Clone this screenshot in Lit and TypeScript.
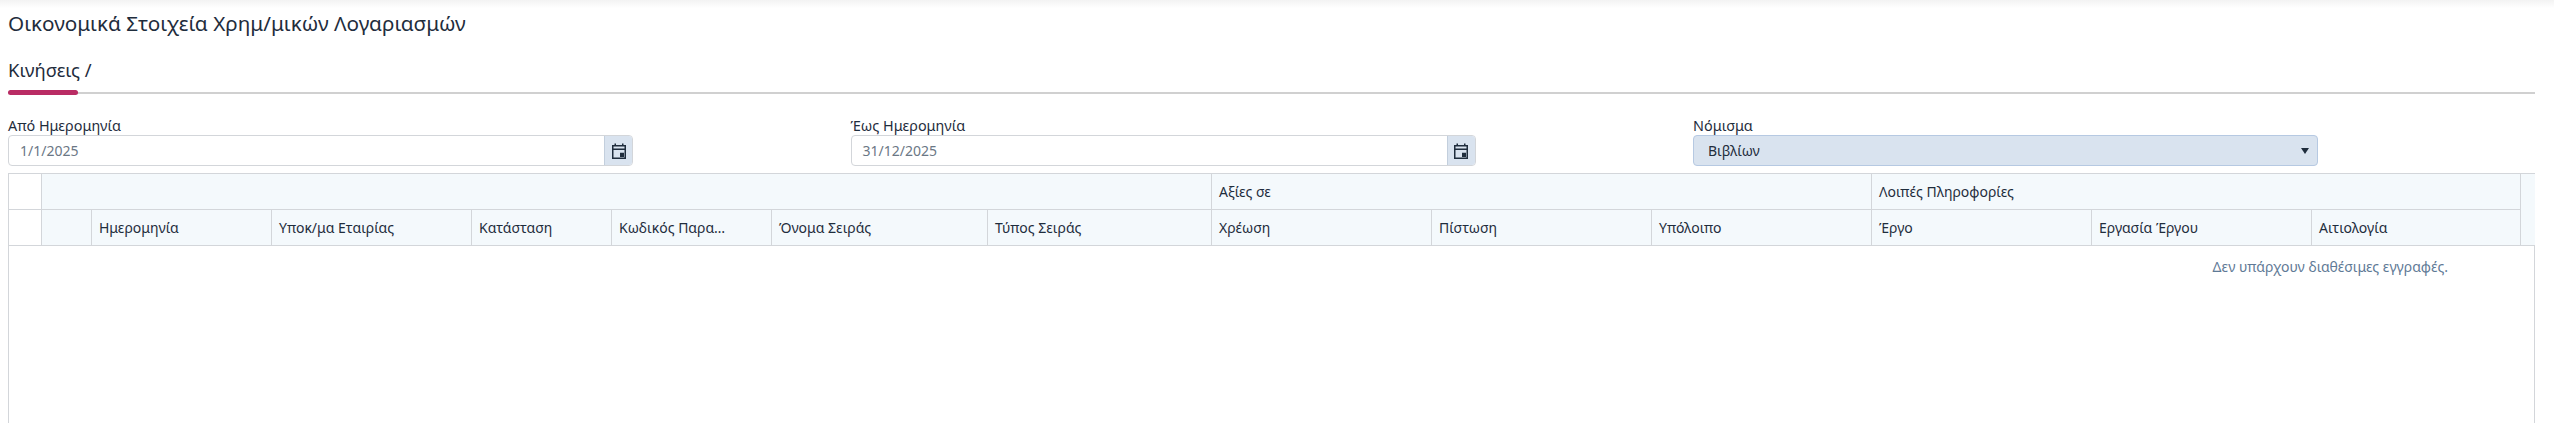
import { LitElement, html, css } from "lit";
import { customElement } from "lit/decorators.js";

const COLS = [
  "Ημερομηνία",
  "Υποκ/μα Εταιρίας",
  "Κατάσταση",
  "Κωδικός Παρα…",
  "Όνομα Σειράς",
  "Τύπος Σειράς",
  "Χρέωση",
  "Πίστωση",
  "Υπόλοιπο",
  "Έργο",
  "Εργασία Έργου",
  "Αιτιολογία",
];

const calendar = html`<svg class="cal" viewBox="0 0 14 16" width="14" height="16" aria-hidden="true">
  <path d="M0.75 2.75H13.25V15.25H0.75ZM0.75 6.25H13.25" fill="none" stroke="currentColor" stroke-width="1.5"/>
  <path d="M2.5 0.5H4V3H2.5ZM10 0.5H11.5V3H10ZM8 9.75H12V14H8Z" fill="currentColor"/>
</svg>`;

@customElement("app-root")
export class AppRoot extends LitElement {
  static styles = css`
    :host {
      display: block;
      height: 423px;
      overflow: hidden;
      background: #fff;
      color: #1f2d3d;
      font-family: "Noto Sans", "Open Sans", sans-serif;
      font-size: 14px;
    }
    .page {
      height: 423px;
      box-sizing: border-box;
      padding: 0 19px 0 8px;
      display: flex;
      flex-direction: column;
      background: linear-gradient(#f3f3f3, #fff 8px);
    }
    .title {
      margin: 0;
      padding-top: 10px;
      font-size: 20.7px;
      line-height: 27px;
      font-weight: 400;
    }
    .tabs {
      margin-top: 21px;
      height: 24px;
      font-size: 18.4px;
      line-height: 24px;
    }
    .rule {
      margin-top: 10px;
      height: 2px;
      background: #d0d0d0;
      position: relative;
    }
    .ink {
      position: absolute;
      left: 0;
      top: -2px;
      width: 70px;
      height: 5px;
      border-radius: 3px;
      background: #b92c64;
    }
    .filters {
      margin-top: 22px;
      display: grid;
      grid-template-columns: repeat(3, 625px);
      column-gap: 217.5px;
    }
    .label {
      font-size: 14.4px;
      line-height: 19px;
      height: 19px;
    }
    .field {
      display: flex;
      height: 31px;
      box-sizing: border-box;
      border: 1px solid #d3d6da;
      border-radius: 4px;
      overflow: hidden;
      color: #6b7785;
      font-size: 14px;
      line-height: 29px;
    }
    .value {
      flex: 1;
      padding-left: 11px;
    }
    .addon {
      box-sizing: border-box;
      width: 28px;
      background: #d9e3ef;
      border-left: 1px solid #c3cfdd;
      display: flex;
      align-items: center;
      justify-content: center;
      color: #1f2d3d;
    }
    .select {
      background: #d9e3ef;
      border-color: #b6c9e2;
      color: #1f2d3d;
      padding-left: 14px;
      padding-right: 8px;
      align-items: center;
      justify-content: space-between;
    }
    .arrow {
      width: 0;
      height: 0;
      border-left: 4px solid transparent;
      border-right: 4px solid transparent;
      border-top: 6px solid #1f2d3d;
    }
    .table {
      margin-top: 7px;
      flex: 1;
      border: 1px solid #d3d6da;
      border-bottom: 0;
      min-height: 0;
    }
    .head {
      display: grid;
      grid-template-columns: 33px 50px 180px 200px 140px 160px 216px 224px 220px 220px 220px 220px 220px 209px 13px;
      grid-template-rows: 36px 36px;
    }
    .cell {
      box-sizing: border-box;
      border-right: 1px solid #d3d6da;
      border-bottom: 1px solid #d3d6da;
      background: #f4f9fc;
      padding: 0 7px;
      line-height: 35px;
      white-space: nowrap;
      min-width: 0;
    }
    .blank { background: #fff; }
    .gutter {
      grid-row: 1 / span 2;
      grid-column: 15;
      border-right: 0;
    }
    .span-7 { grid-column: span 7; }
    .span-3 { grid-column: span 3; }
    .empty {
      padding: 11px 86px 0 0;
      text-align: right;
      color: #5f7a96;
      font-size: 14px;
      line-height: 19px;
    }
  `;

  render() {
    return html`<div class="page">
      <h1 class="title">Οικονομικά Στοιχεία Χρημ/μικών Λογαριασμών</h1>
      <div class="tabs">Κινήσεις /</div>
      <div class="rule"><div class="ink"></div></div>
      <div class="filters">
        <div>
          <div class="label">Από Ημερομηνία</div>
          <div class="field"><span class="value">1/1/2025</span><span class="addon">${calendar}</span></div>
        </div>
        <div>
          <div class="label">Έως Ημερομηνία</div>
          <div class="field"><span class="value">31/12/2025</span><span class="addon">${calendar}</span></div>
        </div>
        <div>
          <div class="label">Νόμισμα</div>
          <div class="field select"><span>Βιβλίων</span><span class="arrow"></span></div>
        </div>
      </div>
      <div class="table">
        <div class="head">
          <div class="cell blank"></div>
          <div class="cell span-7"></div>
          <div class="cell span-3">Αξίες σε</div>
          <div class="cell span-3">Λοιπές Πληροφορίες</div>
          <div class="cell gutter"></div>
          <div class="cell blank"></div>
          <div class="cell"></div>
          ${COLS.map((t) => html`<div class="cell">${t}</div>`)}
        </div>
        <div class="empty">Δεν υπάρχουν διαθέσιμες εγγραφές.</div>
      </div>
    </div>`;
  }
}
